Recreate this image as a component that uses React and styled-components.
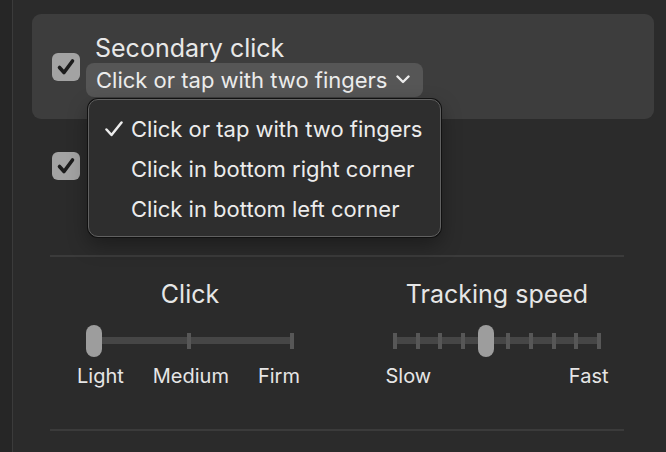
import React from 'react'
import styled, { createGlobalStyle } from 'styled-components'

const Global = createGlobalStyle`
  html, body {
    margin: 0;
    padding: 0;
    background: #2b2b2b;
  }
  body {
    font-family: Inter, "Noto Sans", "Liberation Sans", sans-serif;
    color: #e6e6e6;
    -webkit-font-smoothing: antialiased;
  }
`

const Window = styled.div`
  display: flex;
  width: 666px;
  height: 452px;
  overflow: hidden;
  background: #2b2b2b;
`

const Sidebar = styled.div`
  width: 12px;
  flex-shrink: 0;
  background: #262626;
  border-right: 1px solid #3b3b3b;
`

const Content = styled.div`
  flex: 1;
  padding: 14px 12px 0 19px;
  display: flex;
  flex-direction: column;
`

const Row = styled.div`
  display: flex;
  align-items: center;
  gap: 6px;
  height: ${props => props.height}px;
  padding-left: 20px;
  border-radius: 9px;
  background: ${props => props.active ? '#3d3d3d' : 'transparent'};
`

const Box = styled.div`
  width: 28px;
  height: 28px;
  flex-shrink: 0;
  border-radius: 6px;
  background: #a3a3a3;
  display: flex;
  align-items: center;
  justify-content: center;
`

const TextCol = styled.div`
  display: flex;
  flex-direction: column;
  align-items: flex-start;
`

const Title = styled.div`
  font-size: 25px;
  line-height: 30px;
  margin-left: 9px;
  margin-top: -4px;
  color: #e8e8e8;
`

const PopupWrap = styled.div`
  position: relative;
`

const Pill = styled.div`
  display: flex;
  align-items: center;
  gap: 9px;
  height: 34px;
  padding: 0 13px 0 10px;
  border-radius: 8px;
  background: #565656;
  font-size: 22px;
  color: #ececec;
  white-space: nowrap;
`

const Menu = styled.div`
  position: absolute;
  left: 2px;
  top: 36px;
  width: 353px;
  height: 138px;
  box-sizing: border-box;
  padding-top: 9px;
  border-radius: 10px;
  background: #2e2e2e;
  border: 1px solid #616161;
  box-shadow: 0 0 0 1px #111, 0 8px 20px rgba(0, 0, 0, 0.35);
  z-index: 2;
`

const Item = styled.div`
  display: flex;
  align-items: center;
  height: 40px;
  padding-left: 16px;
  font-size: 22px;
  color: #ececec;
  white-space: nowrap;
`

const Mark = styled.div`
  width: 26px;
  flex-shrink: 0;
  display: flex;
  align-items: center;
`

const Divider = styled.div`
  height: 2px;
  background: #3b3b3b;
  margin: ${props => props.top}px 30px 0 18px;
`

const Sliders = styled.div`
  display: flex;
  gap: 47px;
  padding-left: 28px;
  margin-top: 22px;
`

const SliderCol = styled.div`
  width: 260px;
  display: flex;
  flex-direction: column;
  align-items: center;
`

const SliderTitle = styled.div`
  font-size: 25px;
  line-height: 30px;
  color: #e6e6e6;
`

const Track = styled.div`
  position: relative;
  width: ${props => props.width}px;
  height: 32px;
  margin-top: 16px;
  margin-left: ${props => props.shift || 0}px;
`

const Rail = styled.div`
  position: absolute;
  left: 0;
  right: 0;
  top: 12px;
  height: 7px;
  background: #464646;
`

const Tick = styled.div`
  position: absolute;
  top: 8px;
  width: 4px;
  height: 16px;
  margin-left: -2px;
  background: #575757;
`

const Thumb = styled.div`
  position: absolute;
  top: 0;
  width: 16px;
  height: 32px;
  margin-left: -8px;
  border-radius: 8px;
  background: #9d9d9d;
`

const Labels = styled.div`
  width: 223px;
  display: flex;
  justify-content: space-between;
  margin-top: 6px;
  margin-left: ${props => props.shift || 0}px;
  font-size: 20px;
  line-height: 26px;
  color: #e6e6e6;
`

const Check = ({ size = 28 }) => (
  <svg width={size} height={size} viewBox='0 0 28 28'>
    <path d='M7.5 14.5 L12 19.5 L20.5 8' fill='none' stroke='#1c1c1c' strokeWidth='3.6' strokeLinecap='round' strokeLinejoin='round' />
  </svg>
)

const MenuCheck = () => (
  <svg width='18' height='16' viewBox='0 0 18 16'>
    <path d='M1.5 8.5 L6.5 14 L16.5 1.5' fill='none' stroke='#ececec' strokeWidth='2.5' strokeLinecap='round' strokeLinejoin='round' />
  </svg>
)

const Chevron = () => (
  <svg width='14' height='9' viewBox='0 0 14 9'>
    <path d='M1.5 1.5 L7 7 L12.5 1.5' fill='none' stroke='#ececec' strokeWidth='2.4' strokeLinecap='round' strokeLinejoin='round' />
  </svg>
)

const Slider = ({ width, ticks, value, shift }) => (
  <Track width={width} shift={shift}>
    <Rail />
    {ticks.map(t => <Tick key={t} style={{ left: `${t * 100}%` }} />)}
    <Thumb style={{ left: `${value * 100}%` }} />
  </Track>
)

const options = [
  'Click or tap with two fingers',
  'Click in bottom right corner',
  'Click in bottom left corner'
]

export default function App () {
  const speedTicks = Array.from({ length: 10 }, (_, i) => i / 9)
  return (
    <Window>
      <Global />
      <Sidebar />
      <Content>
        <Row active height={105}>
          <Box><Check /></Box>
          <TextCol>
            <Title>Secondary click</Title>
            <PopupWrap>
              <Pill>{options[0]}<Chevron /></Pill>
              <Menu>
                {options.map((o, i) => (
                  <Item key={o}>
                    <Mark>{i === 0 && <MenuCheck />}</Mark>
                    {o}
                  </Item>
                ))}
              </Menu>
            </PopupWrap>
          </TextCol>
        </Row>
        <Row height={94}>
          <Box><Check /></Box>
        </Row>
        <Divider top={42} />
        <Sliders>
          <SliderCol>
            <SliderTitle>Click</SliderTitle>
            <Slider width={206} ticks={[0.5, 1]} value={0.039} shift={-2} />
            <Labels shift={-3}>
              <span>Light</span>
              <span>Medium</span>
              <span>Firm</span>
            </Labels>
          </SliderCol>
          <SliderCol>
            <SliderTitle>Tracking speed</SliderTitle>
            <Slider width={204} ticks={speedTicks} value={0.446} />
            <Labels>
              <span>Slow</span>
              <span>Fast</span>
            </Labels>
          </SliderCol>
        </Sliders>
        <Divider top={40} />
      </Content>
    </Window>
  )
}
